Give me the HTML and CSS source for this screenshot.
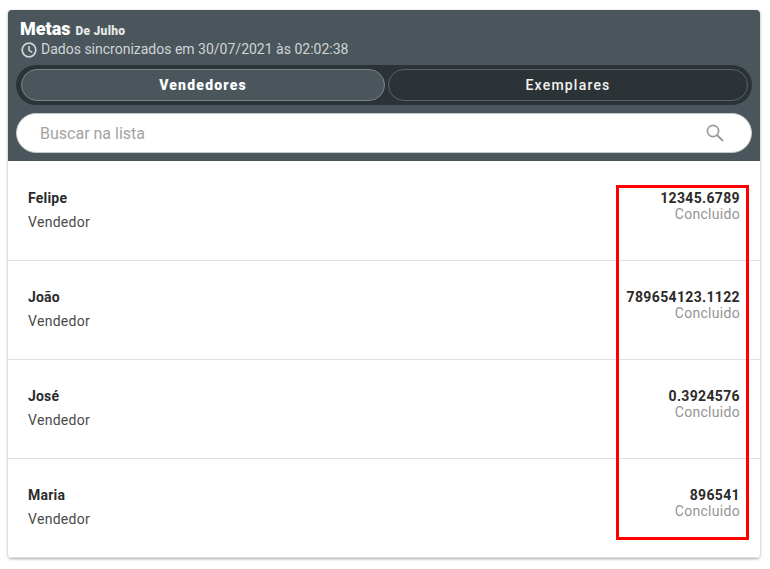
FILE: index.html
```html
<!DOCTYPE html>
<html lang="en">
<head>
    <meta charset="UTF-8">
    <meta name="viewport" content="width=device-width, initial-scale=1.0">
    <title>Metas</title>
    <link rel="stylesheet" href="styles.css">
</head>
<body>
    <div class="card">
        <header class="card-header">
            <h1 class="title">Metas <small>De Julho</small></h1>
            <p class="sync">
                <svg class="clock-icon" viewBox="0 0 16 16" width="16" height="16">
                    <circle cx="8" cy="8" r="6.8" fill="none" stroke="currentColor" stroke-width="1.7"/>
                    <path d="M8 4V8.4L11.2 10.4" fill="none" stroke="currentColor" stroke-width="1.6"/>
                </svg>
                Dados sincronizados em 30/07/2021 às 02:02:38
            </p>
            <div class="tabs">
                <button class="tab tab-active">Vendedores</button>
                <button class="tab tab-other">Exemplares</button>
            </div>
            <div class="search">
                <span class="search-text">Buscar na lista</span>
                <svg class="search-icon" viewBox="0 0 18 18" width="18" height="18">
                    <circle cx="7" cy="7" r="5.6" fill="none" stroke="currentColor" stroke-width="1.6"/>
                    <path d="M11 11L17 17" fill="none" stroke="currentColor" stroke-width="2"/>
                </svg>
            </div>
        </header>

        <div class="list">
            <div class="row">
                <div>
                    <div class="name">Felipe</div>
                    <div class="role">Vendedor</div>
                </div>
                <div class="goal">
                    <div class="value">12345.6789</div>
                    <div class="status">Concluido</div>
                </div>
            </div>
            <div class="row">
                <div>
                    <div class="name">João</div>
                    <div class="role">Vendedor</div>
                </div>
                <div class="goal">
                    <div class="value">789654123.1122</div>
                    <div class="status">Concluido</div>
                </div>
            </div>
            <div class="row">
                <div>
                    <div class="name">José</div>
                    <div class="role">Vendedor</div>
                </div>
                <div class="goal">
                    <div class="value">0.3924576</div>
                    <div class="status">Concluido</div>
                </div>
            </div>
            <div class="row">
                <div>
                    <div class="name">Maria</div>
                    <div class="role">Vendedor</div>
                </div>
                <div class="goal">
                    <div class="value">896541</div>
                    <div class="status">Concluido</div>
                </div>
            </div>
            <!-- Red annotation over the values column -->
            <div class="highlight"></div>
        </div>
    </div>
</body>
</html>
```

FILE: styles.css
```css
body {
    font-family: Roboto, Arial, sans-serif;
    background-color: #ffffff;
    margin: 0;
    padding: 10px 10px 12px 8px;
}

.card {
    border-radius: 4px;
    background-color: #ffffff;
    box-shadow: 0 1px 3px rgba(0, 0, 0, 0.35);
}

.card-header {
    background-color: #4a565c;
    border-radius: 4px 4px 0 0;
    padding: 10px 8px 8px 8px;
}

.title {
    display: flex;
    align-items: baseline;
    gap: 5px;
    margin: 0 0 0 4px;
    font-size: 18px;
    font-weight: 900;
    line-height: 18px;
    color: #ffffff;
}

.title small {
    font-size: 12px;
    font-weight: 900;
    line-height: 12px;
    letter-spacing: 0.25px;
    color: #e6e6e6;
}

.sync {
    display: flex;
    align-items: center;
    gap: 4px;
    margin: 1px 0 6px 5px;
    font-size: 14px;
    line-height: 20px;
    color: #d0d4d6;
}

.clock-icon {
    flex: none;
    margin-top: 2px;
}

.tabs {
    display: flex;
    gap: 3px;
    height: 40px;
    box-sizing: border-box;
    padding: 4px 4px 4px 5px;
    margin-bottom: 8px;
    background-color: #2c3336;
    border-radius: 20px;
}

.tab {
    font-family: Roboto, Arial, sans-serif;
    font-size: 14px;
    font-weight: 500;
    letter-spacing: 1.2px;
    color: #f2f2f2;
    background-color: #2c3336;
    border: 1px solid #596367;
    border-radius: 16px;
    padding: 0;
}

.tab-active {
    flex: 0 0 364px;
    font-weight: 900;
    color: #ffffff;
    background-color: #4a565c;
    border-color: #7a8488;
}

.tab-other {
    flex: 1;
}

.search {
    display: flex;
    align-items: center;
    justify-content: space-between;
    height: 40px;
    box-sizing: border-box;
    padding: 0 27px 0 23px;
    background-color: #ffffff;
    border: 1px solid #c4c8ca;
    border-radius: 20px;
}

.search-text {
    font-size: 16px;
    color: #a3a3a3;
}

.search-icon {
    color: #9a9a9a;
}

.list {
    position: relative;
    padding-top: 1px;
}

.row {
    display: flex;
    justify-content: space-between;
    height: 99px;
    box-sizing: border-box;
    padding: 26px 20px 0;
    border-bottom: 1px solid #e0e0e0;
}

.row:last-of-type {
    height: 98px;
    border-bottom: none;
}

.name {
    font-size: 14px;
    font-weight: 700;
    line-height: 20px;
    letter-spacing: 0.2px;
    color: #2b2b2b;
}

.role {
    margin-top: 4px;
    font-size: 14px;
    line-height: 20px;
    letter-spacing: 0.3px;
    color: #4a4a4a;
}

.goal {
    text-align: right;
}

.value {
    font-size: 14px;
    font-weight: 700;
    line-height: 20px;
    letter-spacing: 0.35px;
    color: #2b2b2b;
}

.status {
    margin-top: -4px;
    font-size: 14px;
    font-weight: 400;
    line-height: 20px;
    letter-spacing: 0.3px;
    color: #949494;
}

.highlight {
    position: absolute;
    top: 24px;
    left: 608px;
    width: 133px;
    height: 355px;
    box-sizing: border-box;
    border: 3px solid #ff0000;
}
```
